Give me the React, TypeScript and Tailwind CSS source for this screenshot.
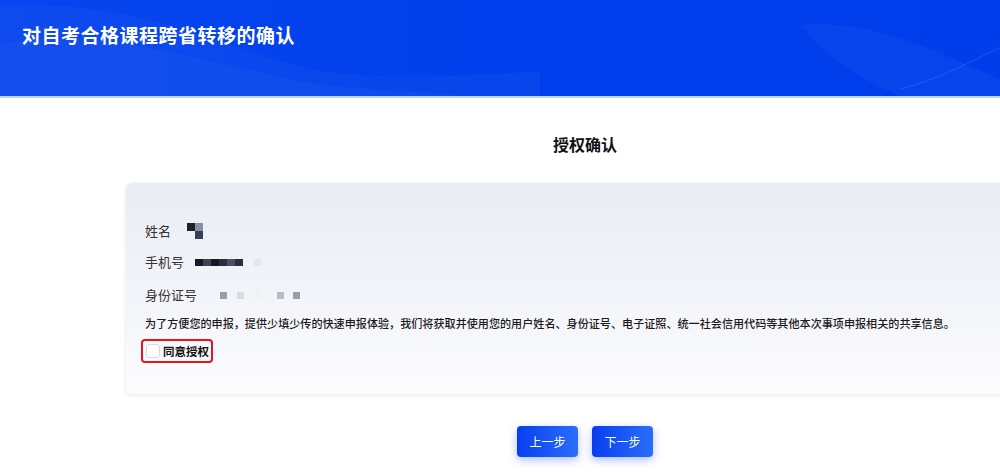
const font = "font-['PingFang_SC','Noto_Sans_CJK_SC',sans-serif]";

type Block = { w: number; h: number; c: string; x: number; y: number };

const nameBlocks: Block[] = [
  { x: 0, y: 0, w: 8, h: 8, c: "bg-[#1e2230]" },
  { x: 8, y: 0, w: 8, h: 8, c: "bg-[#8a90a4]" },
  { x: 8, y: 8, w: 8, h: 8, c: "bg-[#3a4050]" },
];

const phoneBlocks = [
  "bg-[#151a26]",
  "bg-[#3d4352]",
  "bg-[#141923]",
  "bg-[#2a2f3d]",
  "bg-[#4b5162]",
  "bg-[#2b303e]",
];

const idBlocks = [
  { x: 0, c: "bg-[#9a9ea6]" },
  { x: 17, c: "bg-[#d8dbe0]" },
  { x: 34, c: "bg-[#f0f1f4]" },
  { x: 57, c: "bg-[#b9bcc3]" },
  { x: 73, c: "bg-[#9a9ea6]" },
];

function HeaderWaves() {
  return (
    <svg className="absolute inset-0 h-full w-full" viewBox="0 0 1000 97" preserveAspectRatio="none">
      <path d="M0 5 C120 0 200 35 280 62 C350 84 440 78 540 72 L540 97 L0 97 Z" fill="#ffffff" opacity="0.03" />
      <path d="M0 45 C100 25 200 62 300 82 C360 92 420 92 470 97 L0 97 Z" fill="#ffffff" opacity="0.03" />
      <path d="M800 25 C880 20 930 50 1000 80 L1000 97 L900 97 C860 80 830 60 800 25 Z" fill="#ffffff" opacity="0.03" />
      <path d="M900 90 C940 80 970 62 1000 48" stroke="#ffffff" strokeOpacity="0.12" fill="none" />
    </svg>
  );
}

export default function App() {
  return (
    <div className={`w-full min-h-[473px] overflow-hidden bg-white ${font}`}>
      <header className="relative h-[98px] border-b-2 border-[#b9d6fb] bg-gradient-to-r from-[#0745ee] via-[#0040ec] to-[#003eeb]">
        <HeaderWaves />
        <h1 className="relative pl-[22px] pt-[22px] text-[19px] font-bold leading-[26px] tracking-[0.5px] text-white">
          对自考合格课程跨省转移的确认
        </h1>
      </header>

      <main className="w-[1170px]">
        <h2 className="pt-[35px] text-center text-[16px] font-bold leading-[22px] text-[#111]">授权确认</h2>

        <section className="mx-[126px] mt-[28px] h-[211px] rounded-[6px] bg-gradient-to-b from-[#e9ecf4] to-[#fcfcfe] px-[19px] pt-[40px] shadow-[0_1px_4px_rgba(30,40,80,0.12)]">
          <div className="flex items-center gap-[16px] text-[13px] leading-[16px] text-[#333]">
            <span>姓名</span>
            <span className="relative h-[16px] w-[16px]">
              {nameBlocks.map((b, i) => (
                <span
                  key={i}
                  className={`absolute ${b.c}`}
                  style={{ left: b.x, top: b.y, width: b.w, height: b.h }}
                />
              ))}
            </span>
          </div>

          <div className="mt-[15px] flex items-center gap-[11px] text-[13px] leading-[16px] text-[#333]">
            <span>手机号</span>
            <span className="flex h-[7px] items-center">
              {phoneBlocks.map((c, i) => (
                <span key={i} className={`h-[7px] w-[8px] ${c}`} />
              ))}
              <span className="ml-[11px] h-[7px] w-[7px] bg-[#e4e7ef]" />
            </span>
          </div>

          <div className="mt-[17px] flex items-center gap-[23px] text-[13px] leading-[16px] text-[#333]">
            <span>身份证号</span>
            <span className="relative h-[7px] w-[80px]">
              {idBlocks.map((b, i) => (
                <span key={i} className={`absolute top-0 h-[7px] w-[7px] ${b.c}`} style={{ left: b.x }} />
              ))}
            </span>
          </div>

          <p className="mt-[12px] whitespace-nowrap text-[11.1px] font-medium leading-[16px] text-[#1a1a1a]">
            为了方便您的申报，提供少填少传的快速申报体验，我们将获取并使用您的用户姓名、身份证号、电子证照、统一社会信用代码等其他本次事项申报相关的共享信息。
          </p>

          <label className="-ml-[4px] mt-[8px] flex h-[24px] w-[72px] items-center gap-[3px] whitespace-nowrap rounded-[4px] border-2 border-[#e8141b] pl-[3px]">
            <span className="h-[14px] w-[14px] shrink-0 rounded-[3px] border border-[#d4d8e2] bg-white" />
            <span className="text-[11.5px] font-bold leading-[16px] text-[#111]">同意授权</span>
          </label>
        </section>

        <div className="mt-[32px] flex justify-center gap-[14px]">
          <button className="h-[31px] w-[61px] rounded-[4px] bg-gradient-to-r from-[#0a3df0] to-[#2c6cf9] text-[12px] text-white shadow-[0_3px_8px_rgba(20,70,240,0.35)]">
            上一步
          </button>
          <button className="h-[31px] w-[61px] rounded-[4px] bg-gradient-to-r from-[#0a3df0] to-[#2c6cf9] text-[12px] text-white shadow-[0_3px_8px_rgba(20,70,240,0.35)]">
            下一步
          </button>
        </div>
      </main>
    </div>
  );
}
